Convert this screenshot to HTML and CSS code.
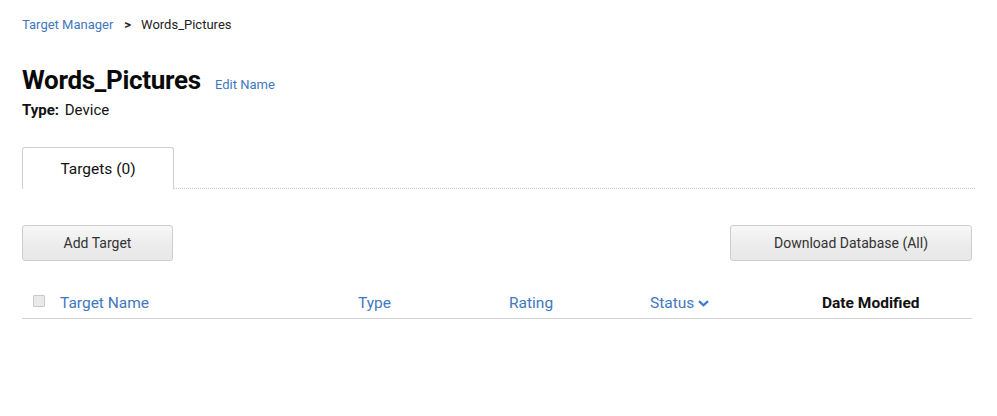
FILE: index.html
```html
<!DOCTYPE html>
<html>
<head>
<meta charset="utf-8">
<link rel="stylesheet" href="styles.css">
</head>
<body>
<div class="page">
  <nav class="crumbs">
    <a class="crumb-link">Target Manager</a>
    <span class="crumb-sep">&gt;</span>
    <span class="crumb-current">Words_Pictures</span>
  </nav>
  <div class="title-row">
    <h1 class="title">Words_Pictures</h1>
    <a class="edit-link">Edit Name</a>
  </div>
  <div class="type-line"><b>Type:</b> Device</div>
  <div class="tabs">
    <div class="tab">Targets (0)</div>
    <div class="tab-rest"></div>
  </div>
  <div class="actions">
    <button class="btn btn-add">Add Target</button>
    <button class="btn btn-download">Download Database (All)</button>
  </div>
  <div class="thead">
    <span class="col col-check"><span class="checkbox"></span></span>
    <span class="col col-name">Target Name</span>
    <span class="col col-type">Type</span>
    <span class="col col-rating">Rating</span>
    <span class="col col-status">Status <svg class="caret" width="11" height="7" viewBox="0 0 11 7"><path d="M1 1.2 L5.5 5.3 L10 1.2" fill="none" stroke="#3b7bd0" stroke-width="2.3"/></svg></span>
    <span class="col col-date">Date Modified</span>
  </div>
</div>
</body>
</html>
```

FILE: styles.css
```css
html, body {
  margin: 0;
  padding: 0;
  background: #fff;
}
body {
  font-family: Roboto, "Liberation Sans", sans-serif;
  color: #111;
}
.page {
  padding: 15px 25px 0 22px;
}
.crumbs {
  display: flex;
  align-items: center;
  font-size: 13px;
  height: 18px;
}
.crumb-link {
  color: #3f78c0;
}
.crumb-sep {
  font-weight: bold;
  margin: 0 10px 0 11px;
  color: #222;
}
.crumb-current {
  color: #222;
}
.title-row {
  display: flex;
  align-items: baseline;
  margin-top: 32px;
  height: 30px;
}
.title {
  font-size: 26px;
  font-weight: 700;
  margin: 0;
  line-height: 30px;
  letter-spacing: -0.3px;
  color: #0a0a0a;
}
.edit-link {
  font-size: 13px;
  color: #3f78c0;
  margin-left: 14px;
}
.type-line {
  margin-top: 6px;
  font-size: 15px;
  line-height: 18px;
  color: #111;
}
.type-line b {
  font-weight: 700;
  margin-right: 2px;
}
.tabs {
  display: flex;
  align-items: flex-end;
  margin-top: 28px;
  margin-right: -3px;
}
.tab {
  width: 150px;
  height: 41px;
  border: 1px solid #cfcfcf;
  border-bottom: none;
  border-radius: 3px 3px 0 0;
  font-size: 15.5px;
  display: flex;
  align-items: center;
  justify-content: center;
  color: #111;
}
.tab-rest {
  flex: 1;
  border-bottom: 1px dotted #c4c4c4;
}
.actions {
  display: flex;
  justify-content: space-between;
  margin-top: 36px;
}
.btn {
  font-family: inherit;
  font-size: 14px;
  color: #333;
  height: 36px;
  border: 1px solid #cdcdcd;
  border-radius: 3px;
  background: linear-gradient(#f8f8f8, #ececec 55%, #e8e8e8);
  padding: 0;
}
.btn-add {
  width: 151px;
}
.btn-download {
  width: 242px;
}
.thead {
  display: flex;
  align-items: center;
  margin-top: 24px;
  height: 33px;
  border-bottom: 1px solid #cfd3d6;
  font-size: 15.5px;
  color: #3f78c0;
}
.col {
  padding-top: 2px;
}
.col-check {
  width: 38px;
  padding-left: 11px;
  box-sizing: border-box;
  display: flex;
  align-items: center;
  padding-top: 0;
  margin-top: -2px;
}
.checkbox {
  width: 10px;
  height: 10px;
  border: 1px solid #c9c9c9;
  background: #e9e9e9;
  border-radius: 1px;
}
.col-name {
  width: 298px;
}
.col-type {
  width: 151px;
}
.col-rating {
  width: 141px;
}
.col-status {
  width: 172px;
  display: flex;
  align-items: center;
  gap: 4px;
}
.caret {
  margin-top: 1px;
}
.col-date {
  color: #111;
  font-weight: 700;
}
```
